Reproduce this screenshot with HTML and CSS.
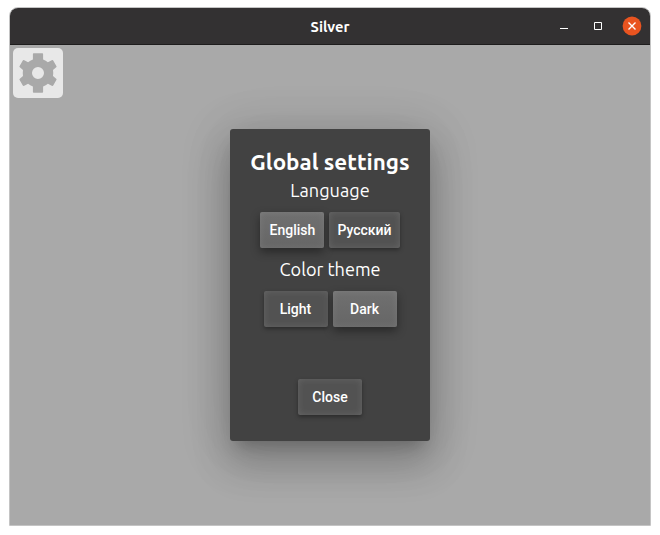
FILE: index.html
```html
<!DOCTYPE html>
<html lang="en">
<head>
<meta charset="utf-8">
<title>Silver</title>
<link rel="stylesheet" href="styles.css">
</head>
<body>
<div class="window">
  <header class="titlebar">
    <span class="title">Silver</span>
    <div class="controls">
      <svg class="minimize" width="8" height="12" viewBox="0 0 8 12"><path d="M0 8.5h8" stroke="#fff"/></svg>
      <svg class="maximize" width="8" height="8" viewBox="0 0 8 8"><path d="M.5.5h7v7h-7z" fill="none" stroke="#fff"/></svg>
      <svg class="exit" width="20" height="20" viewBox="0 0 20 20"><circle cx="10" cy="10" r="9.4" fill="#e95420"/><path d="M6.500 6.500l7 7m0-7l-7 7" stroke="#fff" stroke-width="1.4"/></svg>
    </div>
  </header>
  <main class="content">
    <button class="gear" aria-label="Settings">
      <svg width="50" height="50" viewBox="0 0 50 50"><path fill="#a9a9a9" fill-rule="evenodd" d="M20.700 5.300h8.600q.8 0 .8.800v5.400q2.800 1 4.800 2.700l4.300-2.200q.7-.2 1 .4l3.300 5.800q.3.600-.3 1l-3.200 2.700q.5 3.100 0 6.200l3.200 2.700q.6.400.3 1l-3.300 5.800q-.3.600-1 .4l-4.300-2.200q-2 1.700-4.800 2.700v5.500q0 .8-.8.800h-8.600q-.8 0-.8-.8v-5.500q-2.800-1-4.800-2.700l-4.300 2.200q-.7.200-1-.4l-3.300-5.800q-.3-.6.3-1l3.200-2.700q-.5-3.100 0-6.200l-3.200-2.700q-.6-.4-.3-1l3.300-5.800q.3-.6 1-.4l4.300 2.200q2-1.700 4.800-2.700v-5.400q0-.8.800-.8zM25 19a6 6 0 1 0 0 12a6 6 0 1 0 0-12z"/></svg>
    </button>
    <section class="dialog">
      <h1>Global settings</h1>
      <h2 class="language">Language</h2>
      <div class="row"><button class="btn active">English</button><button class="btn">Русский</button></div>
      <h2 class="theme">Color theme</h2>
      <div class="row"><button class="btn">Light</button><button class="btn active">Dark</button></div>
      <button class="btn close">Close</button>
    </section>
  </main>
</div>
</body>
</html>
```
FILE: styles.css
```css
* { box-sizing: border-box; }
body { margin: 0; background: #fff; height: 535px; padding: 7px 9px 9px; overflow: hidden; font-family: Ubuntu, "Noto Sans", sans-serif; }
.window { width: 642px; height: 519px; border: 1px solid #c4c4c4; border-radius: 9px 9px 0 0; overflow: hidden; display: flex; flex-direction: column; }
.titlebar { height: 37px; flex: none; background: #333132; border-bottom: 1px solid #1e1d1d; display: grid; grid-template-columns: 1fr auto 1fr; align-items: center; color: #fff; }
.title { grid-column: 2; font-size: 14.67px; font-weight: 700; line-height: 20px; padding-top: 1px; }
.controls { justify-self: end; display: flex; align-items: center; padding-right: 8px; }
.controls svg { display: block; }
.maximize { margin: 0 20px 0 26px; }
.content { flex: 1; background: #a9a9a9; padding: 3px; }
button { border: 0; padding: 0; font-family: Roboto, sans-serif; }
.gear { display: block; width: 50px; height: 50px; background: #e8e8e8; border-radius: 5px; }
.gear svg { display: block; }
.dialog { width: 200px; height: 312px; margin: 31px auto 0; padding-top: 19px; background: #424242; border-radius: 3px; color: #fff; display: flex; flex-direction: column; align-items: center; box-shadow: 0 11px 15px -7px rgba(0,0,0,.2), 0 24px 38px 3px rgba(0,0,0,.14), 0 9px 46px 8px rgba(0,0,0,.12), 0 0 60px rgba(0,0,0,.06); }
h1, h2 { margin: 0; white-space: nowrap; }
h1 { font-size: 22.4px; line-height: 28px; font-weight: 700; }
h2 { font-size: 18.1px; line-height: 24px; font-weight: 400; }
.language { margin-top: 2px; }
.theme { margin-top: 9px; }
.row { display: flex; gap: 5px; margin-top: 10px; }
.btn { height: 36px; min-width: 64px; padding: 0 8px; border-radius: 2px; color: #fff; background: #525252; font-size: 14px; font-weight: 500; box-shadow: inset 0 0 7px rgba(255,255,255,.12), 0 2px 4px rgba(0,0,0,.35); }
.active { background: linear-gradient(#707070, #666); box-shadow: inset 0 0 7px rgba(255,255,255,.1), 0 4px 10px rgba(0,0,0,.4); }
.close { margin-top: 52px; }
```
